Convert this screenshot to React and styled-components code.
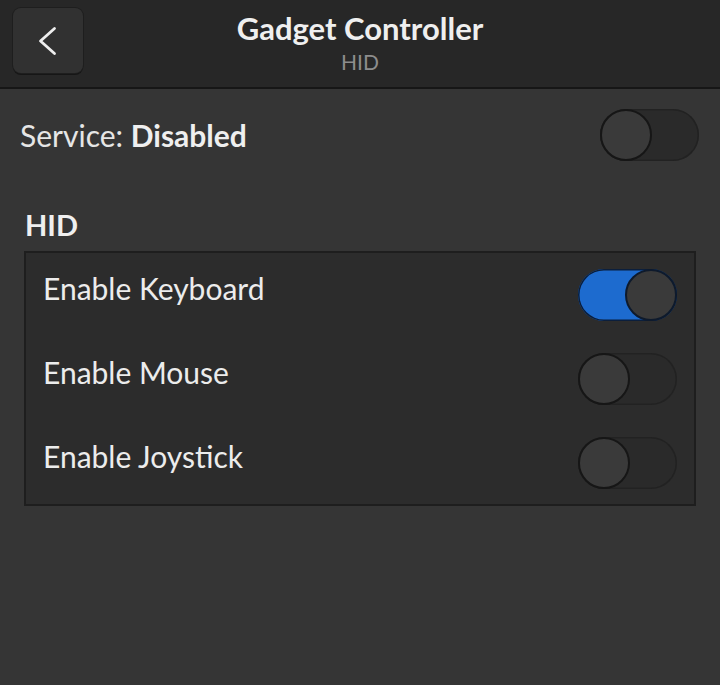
import React from "react";
import styled, { createGlobalStyle } from "styled-components";

const Global = createGlobalStyle`
  html, body { margin: 0; padding: 0; background: #353535; }
  body { font-family: Lato, "Noto Sans", sans-serif; color: #eeeeee; }
  * { box-sizing: border-box; }
`;

const Page = styled.div`
  width: 720px;
  height: 685px;
  background: #353535;
  display: flex;
  flex-direction: column;
`;

const HeaderBar = styled.header`
  height: 89px;
  background: #272727;
  border-bottom: 2px solid #161616;
  display: grid;
  grid-template-columns: 1fr auto 1fr;
  align-items: start;
  padding: 8px 13px 0;
`;

const BackButton = styled.button`
  width: 70px;
  height: 65px;
  border-radius: 8px;
  border: none;
  background: #313131;
  box-shadow: 0 0 0 1px #1e1e1e, 0 2px 0 #161616;
  display: flex;
  align-items: center;
  justify-content: center;
  padding: 0;
  justify-self: start;
`;

const TitleBox = styled.div`
  display: flex;
  flex-direction: column;
  align-items: center;
`;

const Title = styled.div`
  font-weight: 700;
  font-size: 31px;
  line-height: 36px;
  margin-top: 2px;
  color: #efefef;
`;

const Subtitle = styled.div`
  font-size: 21px;
  line-height: 26px;
  color: #8d8d8d;
  margin-top: 3px;
`;

const Content = styled.main`
  display: flex;
  flex-direction: column;
  padding: 20px 0 0;
`;

const ServiceRow = styled.div`
  display: flex;
  align-items: center;
  justify-content: space-between;
  padding: 0 21px 0 20px;
`;

const ServiceText = styled.div`
  font-size: 30px;
  color: #e6e6e6;
  b { font-weight: 700; color: #efefef; }
`;

const SectionTitle = styled.h2`
  margin: 46px 0 0 25px;
  font-size: 29px;
  line-height: 36px;
  font-weight: 700;
  color: #efefef;
`;

const ListBox = styled.div`
  margin: 8px 24px 0 24px;
  background: #2c2c2c;
  border: 2px solid #1e1e1e;
  padding: 16px 17px 15px 17px;
  display: flex;
  flex-direction: column;
  gap: 32px;
`;

const Row = styled.div`
  display: flex;
  align-items: flex-start;
  justify-content: space-between;
`;

const RowLabel = styled.div`
  font-size: 30px;
  line-height: 36px;
  color: #ececec;
  margin-top: 1px;
`;

const Track = styled.div`
  width: 99px;
  height: 52px;
  border-radius: 26px;
  background: ${(p) => (p.$on ? "#1d6bcf" : "#2a2a2a")};
  box-shadow: inset 0 0 0 1.5px ${(p) => (p.$on ? "#0b1f3d" : "#222222")};
  display: flex;
  justify-content: ${(p) => (p.$on ? "flex-end" : "flex-start")};
  flex-shrink: 0;
`;

const Knob = styled.div`
  width: 52px;
  height: 52px;
  border-radius: 50%;
  background: #3a3a3a;
  border: 2px solid ${(p) => (p.$on ? "#0e1a2c" : "#161616")};
`;

function Switch({ on }) {
  return (
    <Track $on={on}>
      <Knob $on={on} />
    </Track>
  );
}

export default function App() {
  return (
    <Page>
      <Global />
      <HeaderBar>
        <BackButton aria-label="Back">
          <svg width="24" height="32" viewBox="0 0 24 32">
            <path d="M18.5 3.5 L4.5 16 L18.5 28.5" fill="none" stroke="#eeeeee" strokeWidth="2.8" strokeLinecap="round" strokeLinejoin="round" />
          </svg>
        </BackButton>
        <TitleBox>
          <Title>Gadget Controller</Title>
          <Subtitle>HID</Subtitle>
        </TitleBox>
        <div />
      </HeaderBar>
      <Content>
        <ServiceRow>
          <ServiceText>
            Service: <b>Disabled</b>
          </ServiceText>
          <Switch on={false} />
        </ServiceRow>
        <SectionTitle>HID</SectionTitle>
        <ListBox>
          <Row>
            <RowLabel>Enable Keyboard</RowLabel>
            <Switch on={true} />
          </Row>
          <Row>
            <RowLabel>Enable Mouse</RowLabel>
            <Switch on={false} />
          </Row>
          <Row>
            <RowLabel>Enable Joystick</RowLabel>
            <Switch on={false} />
          </Row>
        </ListBox>
      </Content>
    </Page>
  );
}
